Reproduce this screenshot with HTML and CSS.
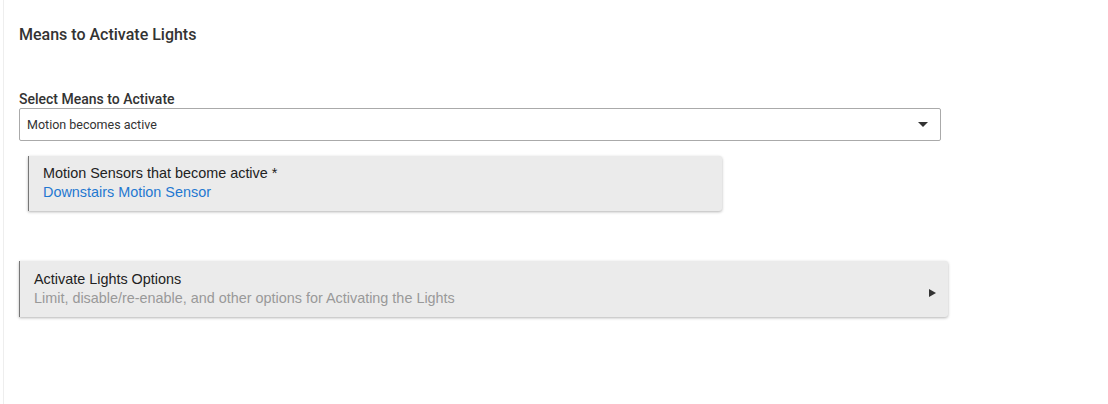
FILE: index.html
```html
<!DOCTYPE html>
<html lang="en">
<head>
  <meta charset="UTF-8">
  <title>Means to Activate Lights</title>
  <link rel="stylesheet" href="styles.css">
</head>
<body>
  <div class="page">
    <h2 class="section-title">Means to Activate Lights</h2>

    <div class="field">
      <label class="field-label">Select Means to Activate</label>
      <div class="select-box">
        <span>Motion becomes active</span>
        <span class="caret"></span>
      </div>
    </div>

    <div class="card device-card">
      <div class="card-title">Motion Sensors that become active *</div>
      <a class="device-link" href="#">Downstairs Motion Sensor</a>
    </div>

    <div class="card options-card">
      <div class="card-text">
        <div class="card-title">Activate Lights Options</div>
        <div class="card-sub">Limit, disable/re-enable, and other options for Activating the Lights</div>
      </div>
      <span class="arrow"></span>
    </div>
  </div>
</body>
</html>
```

FILE: styles.css
```css
body {
  margin: 0;
  padding: 0;
  background: #fff;
  font-family: Roboto, "Liberation Sans", Arial, sans-serif;
  color: #333;
}
.page {
  margin-left: 3px;
  min-height: 404px;
  box-sizing: border-box;
  border-left: 1px solid #eee;
  padding: 25px 0 0 15px;
}
.section-title {
  margin: 0;
  font-size: 16px;
  font-weight: 500;
  line-height: 20px;
  color: #333;
}
.field {
  margin-top: 45px;
  width: 922px;
}
.field-label {
  display: block;
  font-size: 14px;
  font-weight: 500;
  line-height: 18px;
  color: #333;
}
.select-box {
  display: flex;
  align-items: center;
  justify-content: space-between;
  height: 33px;
  box-sizing: border-box;
  border: 1px solid #aaa;
  border-radius: 2px;
  padding: 0 12px 0 7px;
  font-size: 12.5px;
  color: #333;
}
.caret {
  width: 0;
  height: 0;
  border-left: 5px solid transparent;
  border-right: 5px solid transparent;
  border-top: 5px solid #333;
}
.card {
  background: #ebebeb;
  border-left: 1px solid #777;
  border-radius: 0 3px 3px 0;
  box-shadow: 0 1px 3px rgba(0, 0, 0, 0.3);
  font-family: "Liberation Sans", Arial, sans-serif;
  font-size: 14.4px;
  line-height: 19px;
  box-sizing: border-box;
}
.device-card {
  margin: 15px 0 0 9px;
  width: 694px;
  padding: 8px 14px 9px;
}
.card-title {
  color: #222;
}
.device-link {
  display: block;
  color: #1f78d1;
  text-decoration: none;
}
.options-card {
  margin-top: 50px;
  width: 929px;
  padding: 9px 12px 9px 14px;
  display: flex;
  align-items: center;
  justify-content: space-between;
}
.card-sub {
  color: #999;
}
.arrow {
  width: 0;
  height: 0;
  margin-top: 7px;
  border-top: 4px solid transparent;
  border-bottom: 4px solid transparent;
  border-left: 7px solid #333;
}
```
